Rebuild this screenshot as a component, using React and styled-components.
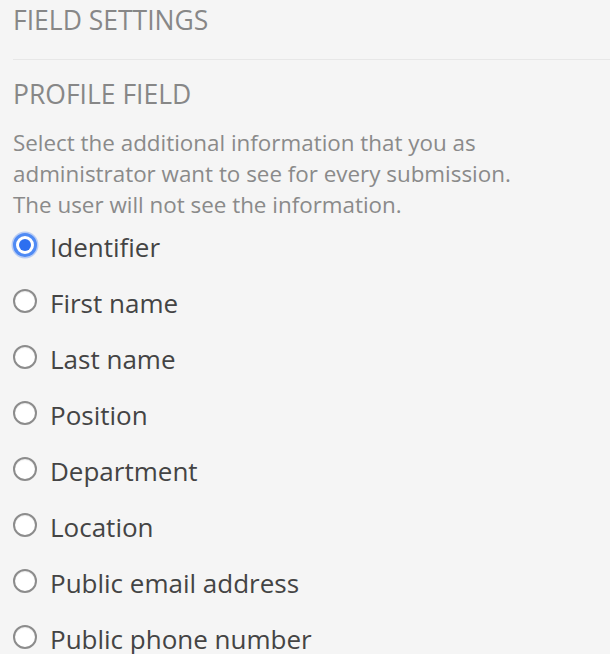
import React, { useState } from "react";
import styled, { createGlobalStyle } from "styled-components";

const GlobalStyle = createGlobalStyle`
  html, body {
    margin: 0;
    padding: 0;
    background: #f5f5f5;
  }
  body {
    font-family: "Open Sans", "Noto Sans", sans-serif;
    -webkit-font-smoothing: antialiased;
  }
`;

const Panel = styled.div`
  min-height: 100vh;
  box-sizing: border-box;
  padding: 2px 0 0 13px;
  background: #f5f5f5;
  overflow: hidden;
`;

const SectionTitle = styled.div`
  font-size: 26.5px;
  line-height: 36px;
  color: #878787;
  text-transform: uppercase;
  margin-bottom: 21px;
`;

const Divider = styled.div`
  height: 1px;
  background: #e7e7e7;
`;

const FieldTitle = styled.div`
  font-size: 26.5px;
  line-height: 36px;
  color: #878787;
  text-transform: uppercase;
  margin-top: 16px;
`;

const Description = styled.p`
  margin: 15px 0 0;
  font-size: 22.4px;
  line-height: 31px;
  color: #8a8a8a;
`;

const OptionList = styled.div`
  display: flex;
  flex-direction: column;
  margin-top: -1px;
`;

const Option = styled.label`
  display: flex;
  align-items: center;
  height: 56px;
  cursor: pointer;
`;

const RadioDot = styled.span`
  position: relative;
  flex: none;
  box-sizing: border-box;
  width: 24px;
  height: 24px;
  margin-bottom: 4px;
  border-radius: 50%;
  background: #fff;
  border: ${(p) => (p.$checked ? "3px solid #4f8af4" : "2px solid #8c8c8c")};
  box-shadow: ${(p) =>
    p.$checked ? "0 0 0 1.5px rgba(110, 155, 245, 0.45)" : "inset 0 1px 1px rgba(0,0,0,0.08)"};

  &::after {
    content: "";
    display: ${(p) => (p.$checked ? "block" : "none")};
    position: absolute;
    left: 50%;
    top: 50%;
    width: 12px;
    height: 12px;
    margin: -6px 0 0 -6px;
    border-radius: 50%;
    background: #2d6ff0;
  }
`;

const OptionText = styled.span`
  margin-left: 13px;
  font-size: 26px;
  line-height: 36px;
  color: #444;
`;

const fields = [
  "Identifier",
  "First name",
  "Last name",
  "Position",
  "Department",
  "Location",
  "Public email address",
  "Public phone number",
];

export default function App() {
  const [selected, setSelected] = useState("Identifier");

  return (
    <>
      <GlobalStyle />
      <Panel>
        <SectionTitle>Field settings</SectionTitle>
        <Divider />
        <FieldTitle>Profile field</FieldTitle>
        <Description>
          Select the additional information that you as administrator want to
          see for every submission.
          <br />
          The user will not see the information.
        </Description>
        <OptionList>
          {fields.map((name) => (
            <Option key={name} onClick={() => setSelected(name)}>
              <RadioDot $checked={selected === name} />
              <OptionText>{name}</OptionText>
            </Option>
          ))}
        </OptionList>
      </Panel>
    </>
  );
}
